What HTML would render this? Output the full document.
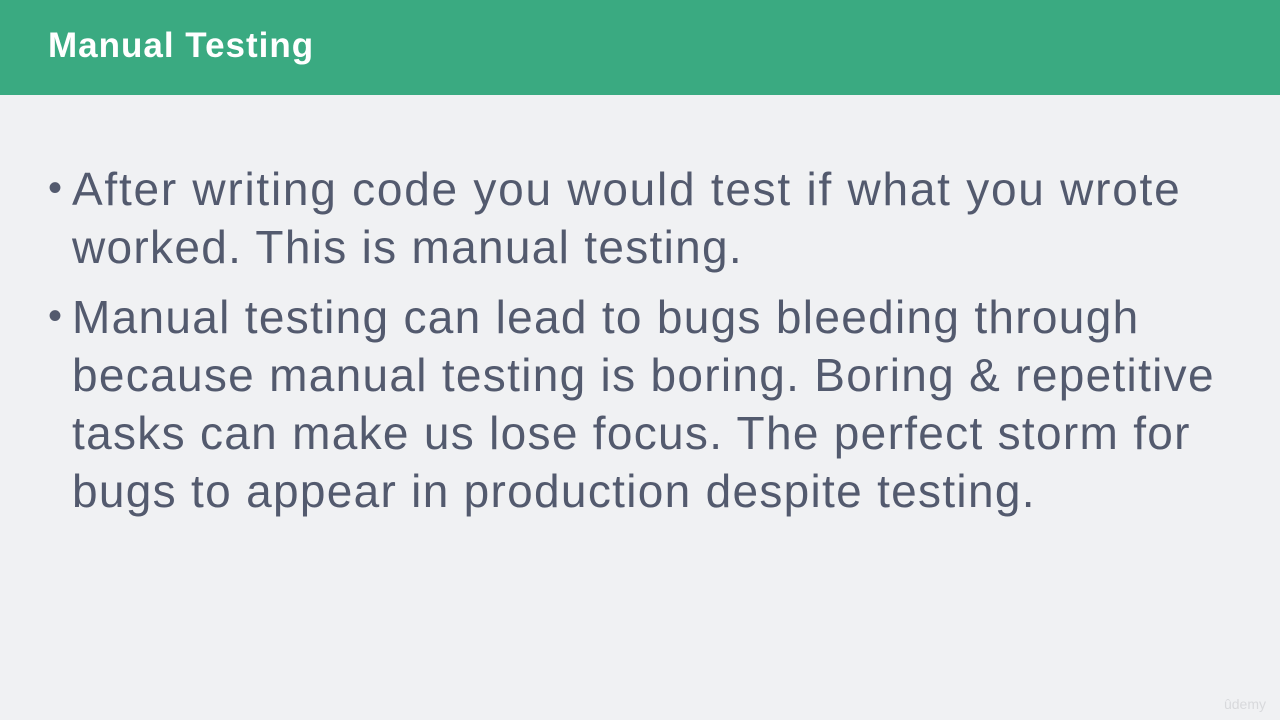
<!DOCTYPE html>
<html><head><meta charset="utf-8"><style>
body{margin:0;width:1280px;height:720px;background:#f0f1f3;overflow:hidden;font-family:"Liberation Sans",sans-serif;position:relative}
.hd{position:absolute;left:0;top:0;width:1280px;height:95px;background:#3aaa81}
.hd span{position:absolute;left:48px;top:26px;color:#fff;font-weight:bold;font-size:35px;letter-spacing:1px}
.l{position:absolute;left:72px;color:#535a6e;font-size:46px;white-space:nowrap;line-height:1;letter-spacing:1.3px}
.b{position:absolute;left:48px;color:#535a6e;font-size:40px;line-height:1}
.u{position:absolute;right:14px;bottom:8px;color:#d8d9dc;font-size:14px}
</style></head><body>
<div class="hd"><span>Manual Testing</span></div>
<div class="b" style="top:168px">•</div>
<div class="l" style="top:166px;letter-spacing:1.75px">After writing code you would test if what you wrote</div>
<div class="l" style="top:224px">worked. This is manual testing.</div>
<div class="b" style="top:296px">•</div>
<div class="l" style="top:294px">Manual testing can lead to bugs bleeding through</div>
<div class="l" style="top:352px">because manual testing is boring. Boring &amp; repetitive</div>
<div class="l" style="top:410px">tasks can make us lose focus. The perfect storm for</div>
<div class="l" style="top:468px">bugs to appear in production despite testing.</div>
<div class="u">ûdemy</div>
</body></html>
